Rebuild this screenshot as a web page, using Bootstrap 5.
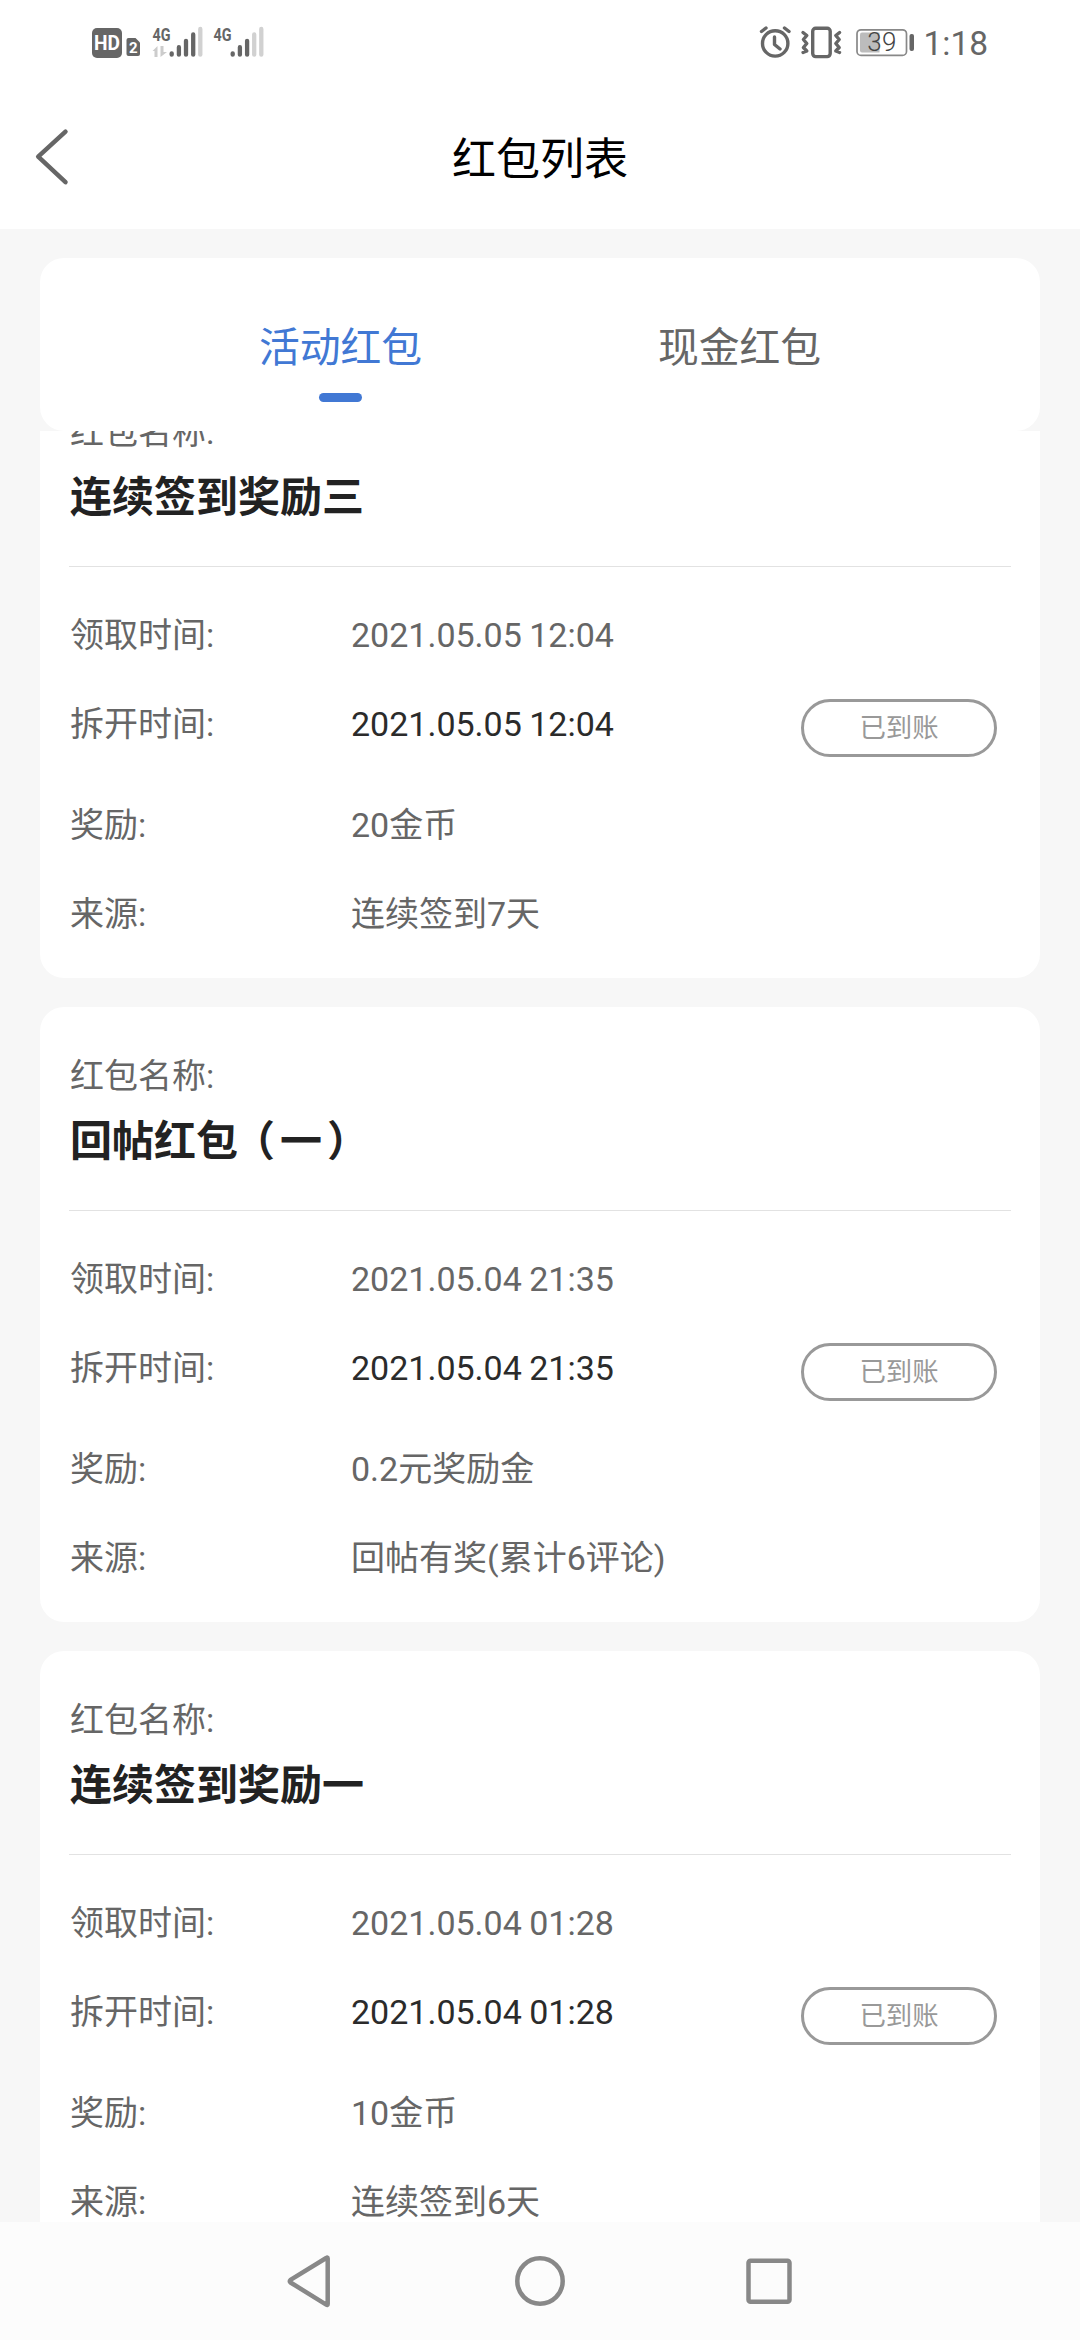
<!DOCTYPE html>
<html lang="zh-CN">
<head>
<meta charset="utf-8">
<meta name="viewport" content="width=device-width, initial-scale=1">
<title>红包列表</title>
<link rel="stylesheet" href="https://cdn.jsdelivr.net/npm/bootstrap@5.3.0/dist/css/bootstrap.min.css">
<style>
body{font-family:Roboto,"Noto Sans CJK SC",sans-serif;background:#f7f7f7;color:#666;font-size:34px;height:2340px;overflow:hidden}
.status-bar{height:84px;flex:none}
.title-bar{height:145px;flex:none;display:grid;grid-template-columns:100px 1fr 100px}
.title-bar h1{font-size:44px;font-weight:400;color:#000;line-height:64px;margin:6px 0 0}
.tab-card{margin:29px 40px 0;height:173px;border-radius:24px;padding:0 101px;flex:none}
.tab-card .nav-link{font-size:40.8px;line-height:60px;padding:60px 0 0;color:#666;width:100%}
.tab-card .nav-link.active{color:#4178d4}
.tab-card .nav-link.active::after{content:"";display:block;width:43px;height:9px;border-radius:5px;background:#4178d4;margin:15px auto 0}
.list-view{flex:1;min-height:0;overflow:hidden;padding:0 40px}
.list-scroll{margin-top:-68px}
.packet{height:615px;border:0;border-radius:24px;margin-bottom:29px;padding:0 29px}
.packet-head{height:204px;border-bottom:1px solid #e2e2e2;padding-top:44px;margin-bottom:24px}
.packet-head h2{font-size:42px;line-height:60px;font-weight:700;color:#222;margin:11px 0 0 1px}
.paren-l{margin:0 5px 0 -5px}
.paren-r{margin-left:5px}
.packet-label{line-height:50px;padding-left:1px}
.info{line-height:89px;height:89px;word-spacing:-1px}
.info-open{height:101px}
.info-name{width:282px;padding-left:1px}
.opened{color:#2b2b2b}
.state-btn{width:196px;height:58px;border:3px solid #999;border-radius:29px;color:#999;font-size:26.4px;line-height:52px;padding:0;margin:-5px 14px 0 auto;background:#fff}
.nav-keys{height:118px;background:#fcfcfc;flex:none}
svg{display:block}
</style>
<script src="https://cdn.jsdelivr.net/npm/bootstrap@5.3.0/dist/js/bootstrap.bundle.min.js"></script>
</head>
<body class="d-flex flex-column">
<header class="bg-white">
  <div class="status-bar">
    <svg width="1080" height="84" viewBox="0 0 1080 84" fill="#666">
      <rect x="92" y="28" width="30" height="30" rx="5"/>
      <text x="107" y="50.300" text-anchor="middle" font-family="Roboto" font-weight="700" font-size="20.500" fill="#fff" textLength="26" lengthAdjust="spacingAndGlyphs">HD</text>
      <path d="M128.500 38h7l4.500 4.500V54a2 2 0 0 1-2 2h-9.500a2 2 0 0 1-2-2V40a2 2 0 0 1 2-2z"/>
      <text x="133.300" y="53" text-anchor="middle" font-family="Roboto" font-weight="700" font-size="15" fill="#fff">2</text>
      <g font-family="Roboto" font-weight="700" font-size="19">
        <text x="152.500" y="40.700" textLength="18" lengthAdjust="spacingAndGlyphs">4G</text>
        <text x="213.500" y="40.700" textLength="18" lengthAdjust="spacingAndGlyphs">4G</text>
      </g>
      <path fill="#ccc" d="M157.500 46v11h-3v-6h-2zM160.500 46h3v6h3.500l-6.500 5z"/>
      <g stroke="#666" stroke-width="4.300" stroke-linecap="round">
        <path d="M171.700 53.300v1.400M178.900 47.200v7.500M186 40.800v13.900M193.200 34.500v20.200"/>
        <path stroke="#d1d1d1" d="M200.300 29v25.700"/>
        <path d="M232.700 53.300v1.400M239.900 47.200v7.500M247.100 40.800v13.900"/>
        <path stroke="#d1d1d1" d="M254.200 34.500v20.200M261.300 29v25.700"/>
      </g>
      <g fill="none" stroke="#666" stroke-width="3.400" stroke-linecap="round" stroke-linejoin="round">
        <circle cx="775.200" cy="43.400" r="12.700"/>
        <path d="M774.500 37v7.500l5.500 4.500M761.500 31.500l4.500-3.500M784.500 28l4.500 3.500"/>
        <rect x="812.700" y="28.200" width="17.500" height="28.400" rx="3"/>
        <path d="M803 32.500l3.800 3-3.400 4 3.400 4-3.400 4 3.400 3.500-3.800 1.500M839.600 32.500l-3.800 3 3.400 4-3.400 4 3.400 4-3.400 3.500 3.800 1.500"/>
      </g>
      <rect x="857" y="29.800" width="49.500" height="25.600" rx="4" fill="#fff" stroke="#888" stroke-width="1.700"/>
      <path fill="#bcbcbc" d="M862 32.500h17.500v20H862a2 2 0 0 1-2-2v-16a2 2 0 0 1 2-2z"/>
      <text x="867.300" y="51" font-family="Roboto" font-weight="300" font-size="26" fill="#444" textLength="29" lengthAdjust="spacing">39</text>
      <rect x="909.500" y="34" width="4.500" height="17" rx="2"/>
      <text x="923.500" y="55" font-family="Roboto" font-size="33.500">1:18</text>
    </svg>
  </div>
  <div class="title-bar align-items-center">
    <svg width="100" height="145" fill="none" stroke="#666" stroke-width="4.500" stroke-linecap="round" stroke-linejoin="round"><path d="M65.500 47.700L38.200 72.700l27.300 25.500"/></svg>
    <h1 class="text-center">红包列表</h1>
  </div>
</header>

<ul class="nav nav-fill tab-card bg-white">
  <li class="nav-item w-50"><a class="nav-link active">活动红包</a></li>
  <li class="nav-item w-50"><a class="nav-link">现金红包</a></li>
</ul>

<main class="list-view">
  <div class="list-scroll">
    <section class="card packet">
      <div class="packet-head"><div class="packet-label">红包名称:</div><h2>连续签到奖励三</h2></div>
      <div class="info d-flex"><span class="info-name">领取时间:</span><span>2021.05.05 12:04</span></div>
      <div class="info info-open d-flex"><span class="info-name">拆开时间:</span><span class="opened">2021.05.05 12:04</span><button class="btn state-btn align-self-center">已到账</button></div>
      <div class="info d-flex"><span class="info-name">奖励:</span><span>20金币</span></div>
      <div class="info d-flex"><span class="info-name">来源:</span><span>连续签到7天</span></div>
    </section>
    <section class="card packet">
      <div class="packet-head"><div class="packet-label">红包名称:</div><h2>回帖红包<span class="paren-l">（</span>一<span class="paren-r">）</span></h2></div>
      <div class="info d-flex"><span class="info-name">领取时间:</span><span>2021.05.04 21:35</span></div>
      <div class="info info-open d-flex"><span class="info-name">拆开时间:</span><span class="opened">2021.05.04 21:35</span><button class="btn state-btn align-self-center">已到账</button></div>
      <div class="info d-flex"><span class="info-name">奖励:</span><span>0.2元奖励金</span></div>
      <div class="info d-flex"><span class="info-name">来源:</span><span>回帖有奖(累计6评论)</span></div>
    </section>
    <section class="card packet">
      <div class="packet-head"><div class="packet-label">红包名称:</div><h2>连续签到奖励一</h2></div>
      <div class="info d-flex"><span class="info-name">领取时间:</span><span>2021.05.04 01:28</span></div>
      <div class="info info-open d-flex"><span class="info-name">拆开时间:</span><span class="opened">2021.05.04 01:28</span><button class="btn state-btn align-self-center">已到账</button></div>
      <div class="info d-flex"><span class="info-name">奖励:</span><span>10金币</span></div>
      <div class="info d-flex"><span class="info-name">来源:</span><span>连续签到6天</span></div>
    </section>
  </div>
</main>

<footer class="nav-keys">
  <svg width="1080" height="118" fill="none" stroke="#888" stroke-width="4.500" stroke-linejoin="round">
    <path d="M327.700 36.500v45.500q0 1.500-1.500 .6L290.500 60.500q-1.500-1.300 0-2.600L326.200 36q1.500-1 1.500 .5z"/>
    <circle cx="540" cy="59" r="22.700"/>
    <rect x="748.500" y="38.700" width="41" height="41" rx="2"/>
  </svg>
</footer>
</body>
</html>
